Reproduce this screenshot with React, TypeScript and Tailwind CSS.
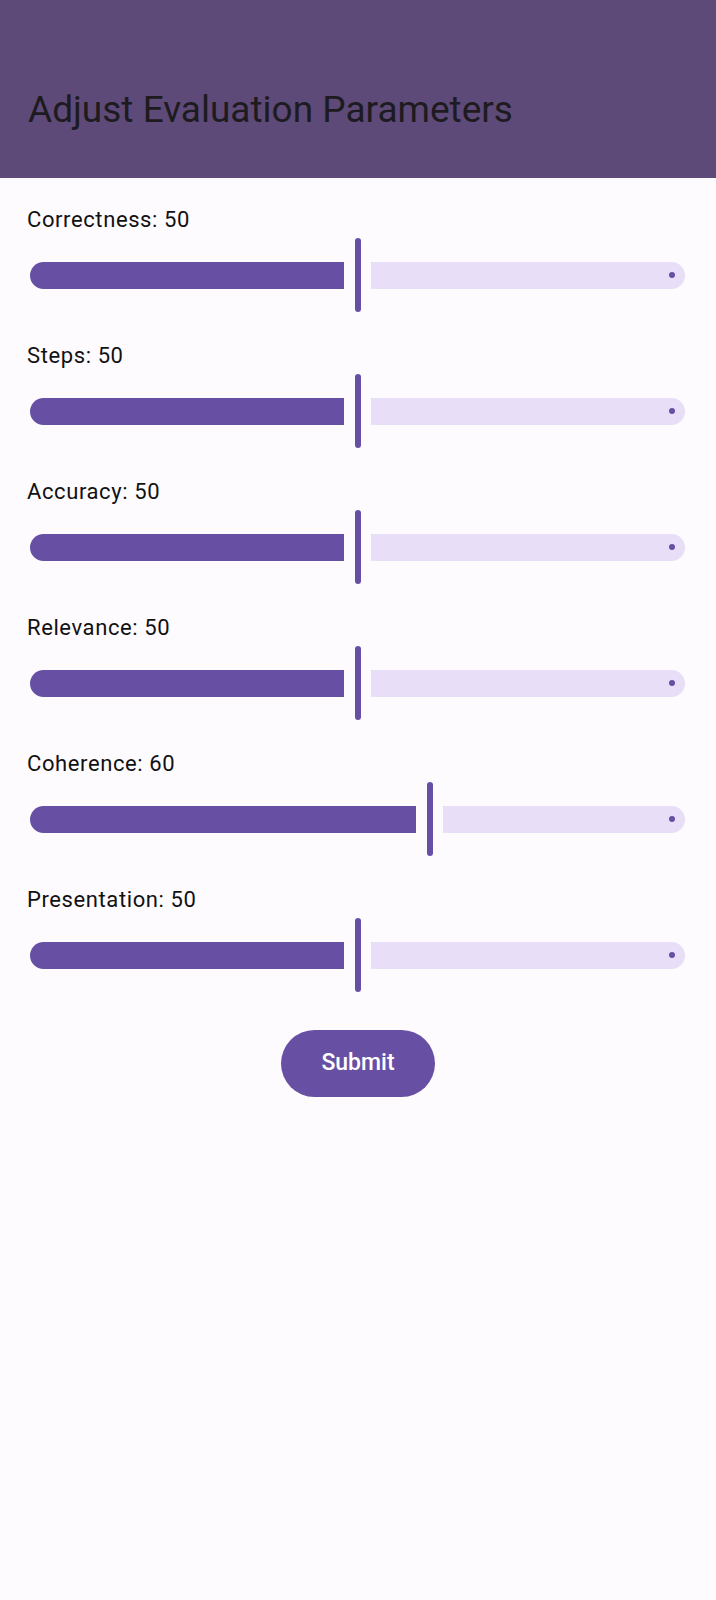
import React from 'react';

type Param = { name: string; value: number };

const params: Param[] = [
  { name: 'Correctness', value: 50 },
  { name: 'Steps', value: 50 },
  { name: 'Accuracy', value: 50 },
  { name: 'Relevance', value: 50 },
  { name: 'Coherence', value: 60 },
  { name: 'Presentation', value: 50 },
];

const Slider = ({ value }: { value: number }) => {
  // active part width in px, taken from the value
  const activeWidth = value * 7.2 - 46;

  return (
    <div className="flex items-center h-[74px] ml-[3px] mr-[4px]">
      <div
        className="h-[27px] bg-[#6750a4] rounded-l-full rounded-r-[4px] shrink-0"
        style={{ width: activeWidth }}
      />
      <div className="ml-[11px] mr-[10px] w-[6px] h-[74px] rounded-full bg-[#6750a4] shrink-0" />
      <div className="flex-1 h-[27px] bg-[#e8def8] rounded-l-[4px] rounded-r-full flex items-center justify-end pr-[10px]">
        <div className="w-[6px] h-[6px] rounded-full bg-[#6750a4]" />
      </div>
    </div>
  );
};

export default function App() {
  return (
    <div className="min-h-[1600px] w-full bg-[#fefbff] font-['Roboto',sans-serif]">
      <header className="h-[178px] bg-[#5d4a78] pt-[88px] px-[28px]">
        <h1 className="text-[37px] leading-[44px] font-normal text-[#1d1b20]">
          Adjust Evaluation Parameters
        </h1>
      </header>

      <main className="px-[27px] pt-[29px] flex flex-col gap-[31px]">
        {params.map((p) => (
          <div key={p.name} className="flex flex-col gap-[5px]">
            <p className="text-[22px] leading-[26px] tracking-[0.6px] text-[#111111]">
              {p.name}: {p.value}
            </p>
            <Slider value={p.value} />
          </div>
        ))}
      </main>

      <div className="flex justify-center pt-[38px]">
        <button className="w-[154px] h-[67px] rounded-full bg-[#6750a4] text-white text-[23px] font-medium">
          Submit
        </button>
      </div>
    </div>
  );
}
